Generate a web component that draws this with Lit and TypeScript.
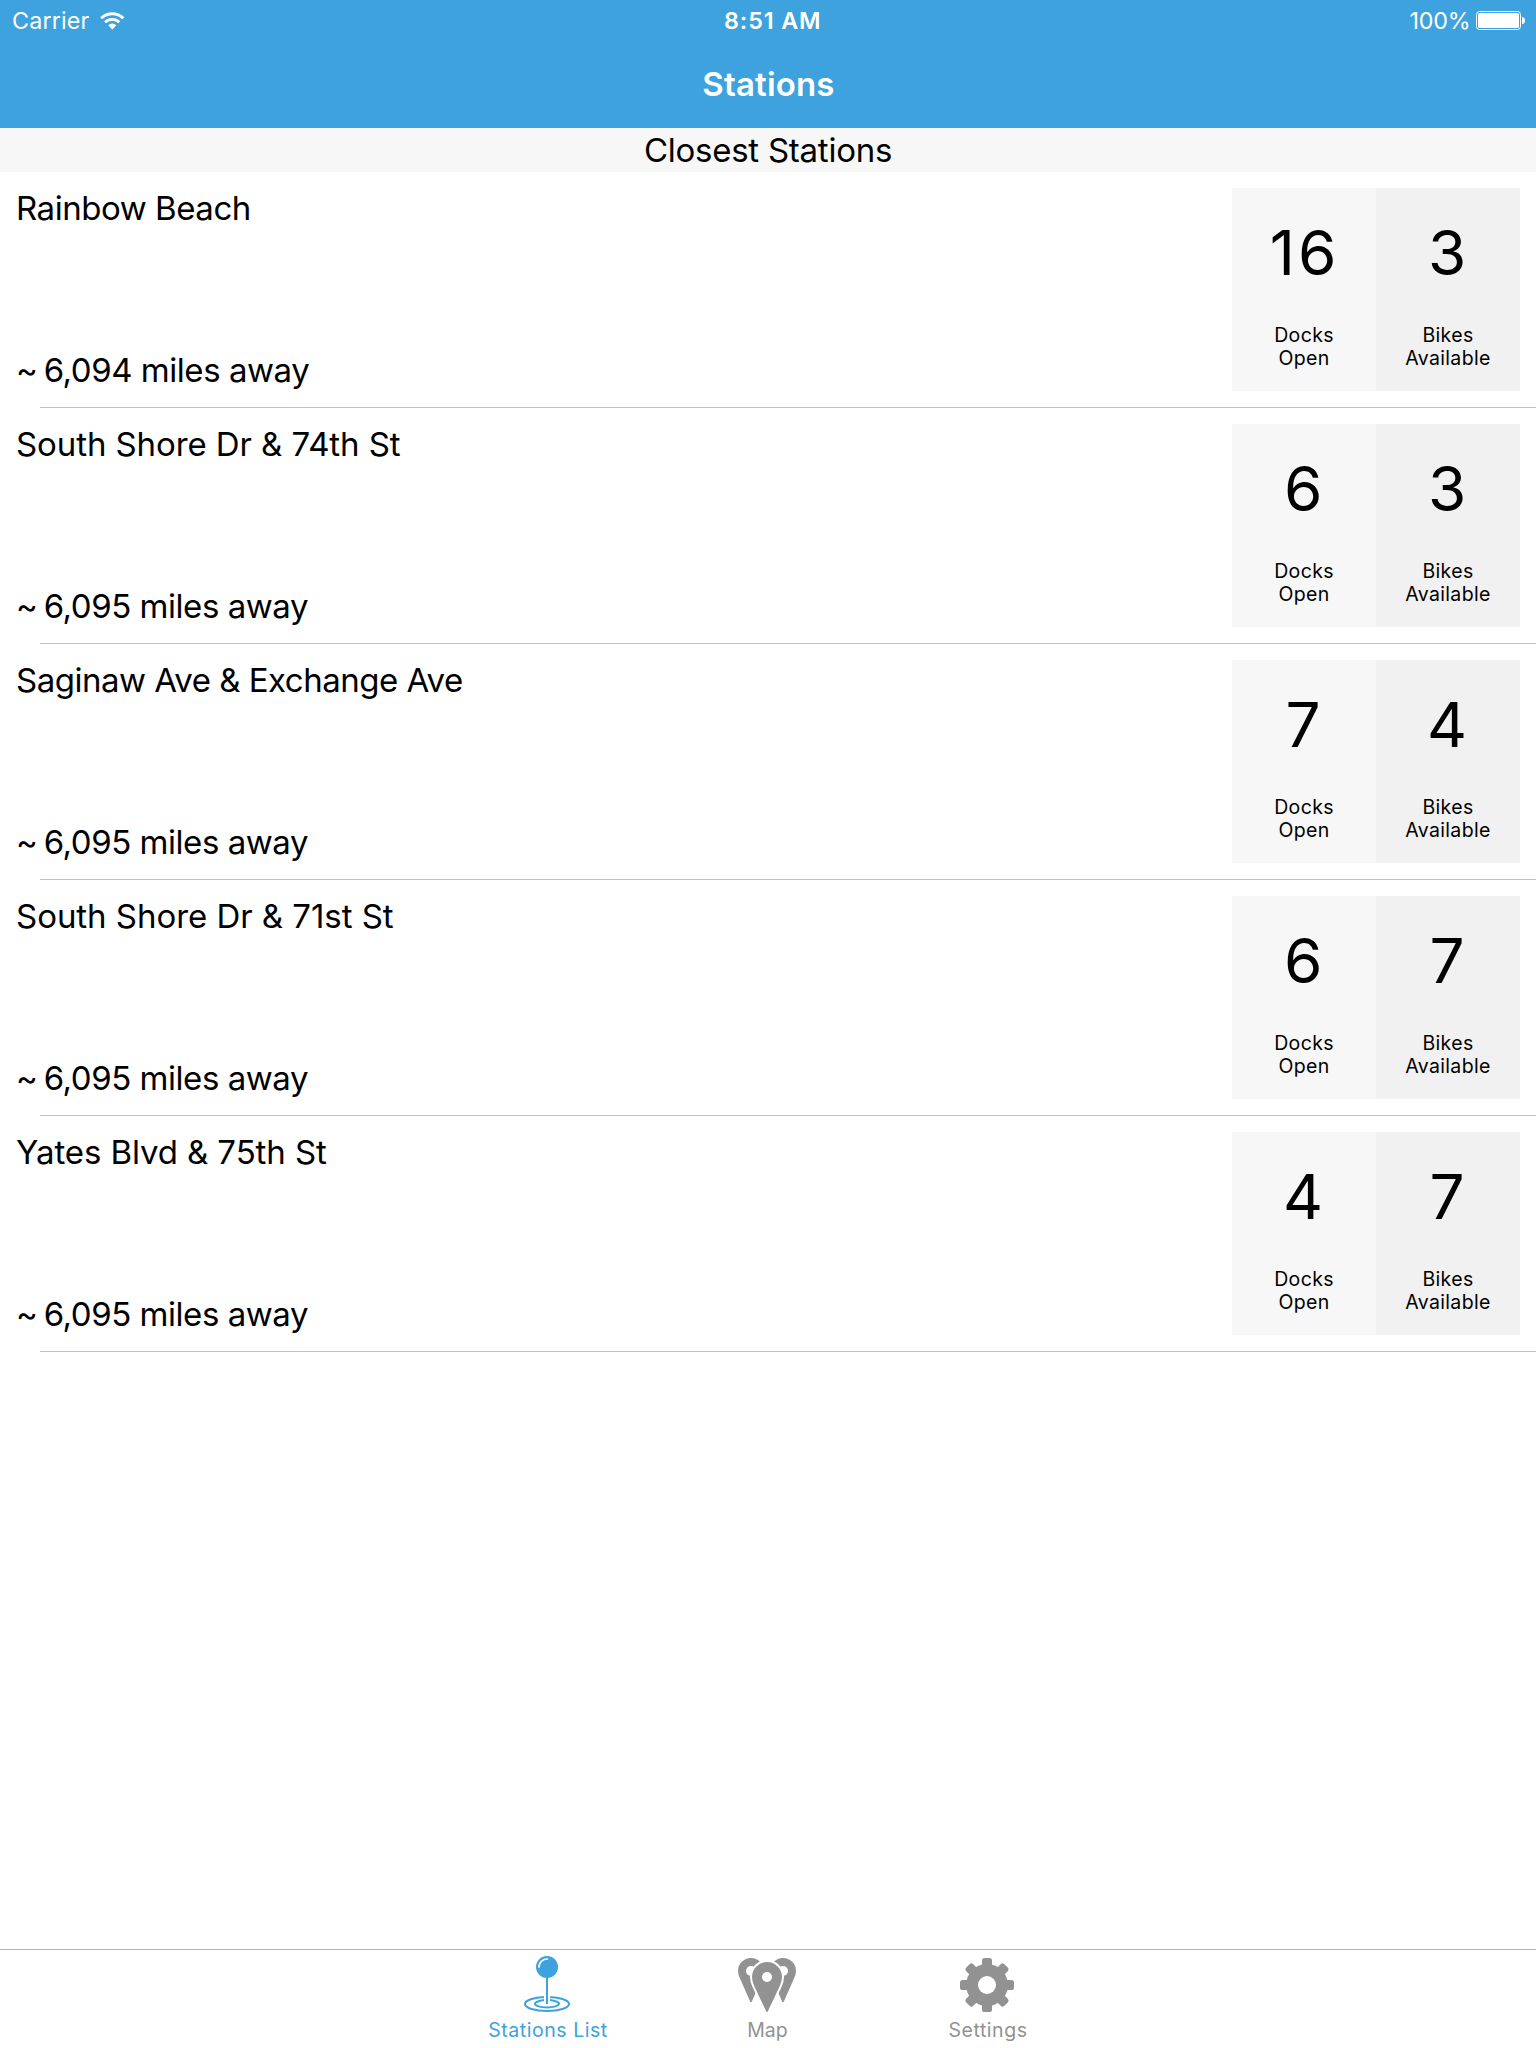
import { LitElement, html, svg, css } from "lit";
import { customElement, property } from "lit/decorators.js";

interface Station {
  name: string;
  miles: string;
  docks: number;
  bikes: number;
  tracking: number;
}

const STATIONS: Station[] = [
  { name: "Rainbow Beach", miles: "6,094", docks: 16, bikes: 3, tracking: -0.46 },
  { name: "South Shore Dr & 74th St", miles: "6,095", docks: 6, bikes: 3, tracking: -0.09 },
  { name: "Saginaw Ave & Exchange Ave", miles: "6,095", docks: 7, bikes: 4, tracking: -0.5 },
  { name: "South Shore Dr & 71st St", miles: "6,095", docks: 6, bikes: 7, tracking: -0.04 },
  { name: "Yates Blvd & 75th St", miles: "6,095", docks: 4, bikes: 7, tracking: -0.1 },
];

const wifiIcon = html`<svg class="wifi" width="25" height="19" viewBox="0 0 25 19" fill="none">
  <path d="M1.2 7.2A15.8 15.8 0 0 1 23.3 7.2" stroke="#fff" stroke-width="2.9" />
  <path d="M5.1 11.3A10.2 10.2 0 0 1 19.4 11.3" stroke="#fff" stroke-width="2.7" />
  <path d="M12.25 18.4L8.2 14.2A5.9 5.9 0 0 1 16.3 14.2Z" fill="#fff" />
</svg>`;

const batteryIcon = html`<svg class="battery" width="49" height="19" viewBox="0 0 49 19">
  <rect x="0.5" y="0.5" width="44" height="18" rx="3" fill="none" stroke="#fff" />
  <rect x="2" y="2" width="41" height="15" rx="1.6" fill="#fff" />
  <path d="M46 6C48 6.2 49 7.6 49 9.5S48 12.8 46 13Z" fill="#fff" />
</svg>`;

const pinIcon = svg`
  <ellipse cx="31" cy="54" rx="22" ry="7" fill="none" stroke="currentColor" stroke-width="2" />
  <ellipse cx="31" cy="53.8" rx="12" ry="3.7" fill="none" stroke="currentColor" stroke-width="2" />
  <rect x="28" y="44" width="6" height="9" fill="#fff" />
  <rect x="30" y="27" width="2" height="27" fill="currentColor" />
  <circle cx="31" cy="17" r="11" fill="currentColor" />
  <path d="M23 17.6A8.2 8.2 0 0 1 32.2 9" fill="none" stroke="#fff" stroke-width="1.6" />`;

const mapIcon = svg`
  <g fill="currentColor">
    <path d="M14.4 52L4 28.6Q2 24.5 2 21A13 13 0 0 1 28 21Q28 24.5 26 28.6L15.6 52Z" />
    <path d="M46.4 52L36 28.6Q34 24.5 34 21A13 13 0 0 1 60 21Q60 24.5 58 28.6L47.6 52Z" />
  </g>
  <circle cx="15" cy="21" r="5" fill="#fff" />
  <circle cx="47" cy="21" r="5" fill="#fff" />
  <path d="M30.5 62L18.2 36Q16 31 16 27A15 15 0 0 1 46 27Q46 31 43.8 36L31.5 62Z"
    fill="currentColor" stroke="#fff" stroke-width="4" paint-order="stroke" />
  <circle cx="31" cy="27" r="5" fill="#fff" />`;

const gearIcon = svg`
  <g fill="currentColor">
    ${[0, 45, 90, 135].map(
      (a) => svg`<rect x="26" y="8" width="10" height="54" rx="2.6" transform="rotate(${a} 31 35)" />`
    )}
    <circle cx="31" cy="35" r="21" />
  </g>
  <circle cx="31" cy="35" r="9" fill="#fff" />`;

@customElement("station-row")
export class StationRow extends LitElement {
  @property({ attribute: false }) station!: Station;

  static styles = css`
    :host {
      display: block;
    }
    .row {
      display: flex;
      justify-content: space-between;
      height: 203px;
      padding: 16px 16px 16px;
    }
    .info {
      display: flex;
      flex-direction: column;
      justify-content: space-between;
      font-size: 33px;
      white-space: nowrap;
    }
    .name {
      line-height: 40px;
    }
    .distance {
      line-height: 42px;
      letter-spacing: -0.46px;
    }
    .tilde {
      margin-right: -2.5px;
    }
    .counts {
      display: flex;
    }
    .count {
      width: 144px;
      background: #f7f7f7;
      text-align: center;
    }
    .bikes {
      background: #f1f1f1;
    }
    .number {
      font-size: 62px;
      line-height: 130px;
      letter-spacing: 2.8px;
      padding-left: 1px;
    }
    .label {
      margin-top: 6px;
      font-size: 19.5px;
      line-height: 23px;
      letter-spacing: 0.35px;
    }
    .separator {
      height: 1px;
      margin-left: 40px;
      background: #c3c3c5;
    }
  `;

  render() {
    const s = this.station;
    return html`
      <div class="row">
        <div class="info">
          <div class="name" style="letter-spacing:${s.tracking}px">${s.name}</div>
          <div class="distance"><span class="tilde">~</span> ${s.miles} miles away</div>
        </div>
        <div class="counts">
          <div class="count">
            <div class="number">${s.docks}</div>
            <div class="label">Docks<br />Open</div>
          </div>
          <div class="count bikes">
            <div class="number">${s.bikes}</div>
            <div class="label">Bikes<br />Available</div>
          </div>
        </div>
      </div>
      <div class="separator"></div>
    `;
  }
}

@customElement("app-root")
export class AppRoot extends LitElement {
  static styles = css`
    :host {
      display: flex;
      flex-direction: column;
      height: 2048px;
      background: #fff;
      color: #000;
      font-family: "Inter", "Liberation Sans", sans-serif;
    }
    .header {
      height: 128px;
      background: #3da2dd;
      color: #fff;
    }
    .status {
      display: grid;
      grid-template-columns: 712px 1fr auto;
      height: 40px;
      padding: 0 11px 0 12px;
      font-size: 23.3px;
      line-height: 41px;
    }
    .carrier,
    .power {
      display: flex;
      align-items: flex-start;
    }
    .carrier {
      letter-spacing: 0.15px;
    }
    .wifi {
      margin: 10.5px 0 0 11px;
    }
    .battery {
      margin: 11px 0 0 6px;
    }
    .time {
      font-weight: 600;
      font-size: 23.3px;
      letter-spacing: 0.9px;
    }
    .percent {
      letter-spacing: -0.15px;
      margin-right: -0.6px;
    }
    .title {
      height: 88px;
      line-height: 88px;
      font-size: 33px;
      font-weight: 600;
      letter-spacing: 0.17px;
      text-align: center;
      padding-left: 1px;
    }
    .section {
      height: 44px;
      background: #f7f7f7;
      font-size: 33px;
      line-height: 44px;
      letter-spacing: -0.25px;
      text-align: center;
    }
    .list {
      flex: 1;
    }
    .tabs {
      display: flex;
      justify-content: center;
      height: 98px;
      border-top: 1px solid #b2b2b2;
    }
    .tab {
      display: flex;
      flex-direction: column;
      align-items: center;
      width: 220px;
      color: #929292;
      font-size: 19.5px;
      line-height: 24px;
    }
    .tab svg {
      display: block;
      margin-bottom: 4px;
    }
    .tab.active {
      color: #3da2dd;
    }
    .wide {
      letter-spacing: 0.55px;
    }
    .tight {
      padding-right: 1px;
    }
  `;

  private tab(label: string, icon: unknown, active = false, wide = true) {
    return html`<div class="tab ${active ? "active" : ""}">
      <svg width="64" height="64" viewBox="0 0 64 64">${icon}</svg>
      <span class=${wide ? "wide" : "tight"}>${label}</span>
    </div>`;
  }

  render() {
    return html`
      <div class="header">
        <div class="status">
          <div class="carrier"><span>Carrier</span>${wifiIcon}</div>
          <div class="time">8:51 AM</div>
          <div class="power"><span class="percent">100%</span>${batteryIcon}</div>
        </div>
        <div class="title">Stations</div>
      </div>
      <div class="section">Closest Stations</div>
      <div class="list">
        ${STATIONS.map((s) => html`<station-row .station=${s}></station-row>`)}
      </div>
      <div class="tabs">
        ${this.tab("Stations List", pinIcon, true)}
        ${this.tab("Map", mapIcon, false, false)}
        ${this.tab("Settings", gearIcon)}
      </div>
    `;
  }
}
